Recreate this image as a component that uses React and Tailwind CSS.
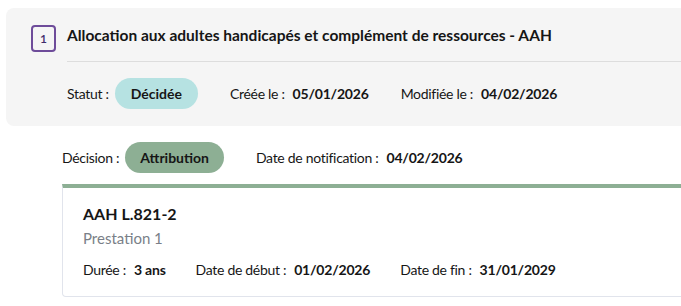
import React from "react";

const font = { fontFamily: "Lato, 'Open Sans', sans-serif" };

function Pill({ children, className }) {
  return (
    <span className={`inline-flex h-[31px] items-center rounded-full px-4 text-[14px] font-bold text-[#161616] ${className}`}>
      {children}
    </span>
  );
}

function Field({ label, value }) {
  return (
    <div className="flex items-center gap-[8px] text-[14px] text-[#161616]">
      <span className="tracking-[-0.3px]">{label}</span>
      <span className="font-bold tracking-[-0.2px]">{value}</span>
    </div>
  );
}

export default function App() {
  return (
    <div className="min-h-[306px] w-[681px] overflow-hidden bg-white" style={font}>
      <div className="pl-[6px] pt-[8px]">
        <div className="w-[700px] rounded-lg bg-[#f5f5f5] pb-[17px] pl-[25px] pt-[17px]">
          <div className="flex items-start gap-[11px]">
            <div className="flex h-[27px] w-[25px] shrink-0 items-center justify-center rounded-[4px] border-2 border-[#6e4c9a] text-[12px] font-semibold text-[#3f2d6b]">
              1
            </div>
            <div className="flex-1">
              <h1 className="text-[15.5px] font-bold leading-[20px] text-[#161616]">
                Allocation aux adultes handicapés et complément de ressources - AAH
              </h1>
              <div className="mt-[16px] h-px bg-[#dddddd]" />
              <div className="mt-[16px] flex items-center">
                <div className="flex items-center gap-[6px] text-[14px] text-[#161616]">
                  <span className="tracking-[-0.3px]">Statut :</span>
                  <Pill className="bg-[#b6e2e2]">Décidée</Pill>
                </div>
                <div className="ml-[32px]">
                  <Field label="Créée le :" value="05/01/2026" />
                </div>
                <div className="ml-[32px]">
                  <Field label="Modifiée le :" value="04/02/2026" />
                </div>
              </div>
            </div>
          </div>
        </div>
      </div>

      <div className="pl-[62px]">
        <div className="mt-[16px] flex items-center">
          <div className="flex items-center gap-[6px] text-[14px] text-[#161616]">
            <span className="tracking-[-0.3px]">Décision :</span>
            <Pill className="bg-[#8daf94] px-[15px]">Attribution</Pill>
          </div>
          <div className="ml-[32px]">
            <Field label="Date de notification :" value="04/02/2026" />
          </div>
        </div>

        <div className="mt-[11px] w-[680px] rounded-b-[4px] border border-t-4 border-[#e1e4ec] border-t-[#8daf94] pb-[16px] pl-[20px] pt-[15px]">
          <div className="text-[16px] font-bold leading-[22px] text-[#161616]">AAH L.821-2</div>
          <div className="mt-[3px] text-[15px] leading-[20px] text-[#7a7f88]">Prestation 1</div>
          <div className="mt-[11px] flex items-center gap-[30px]">
            <Field label="Durée :" value="3 ans" />
            <Field label="Date de début :" value="01/02/2026" />
            <Field label="Date de fin :" value="31/01/2029" />
          </div>
        </div>
      </div>
    </div>
  );
}
